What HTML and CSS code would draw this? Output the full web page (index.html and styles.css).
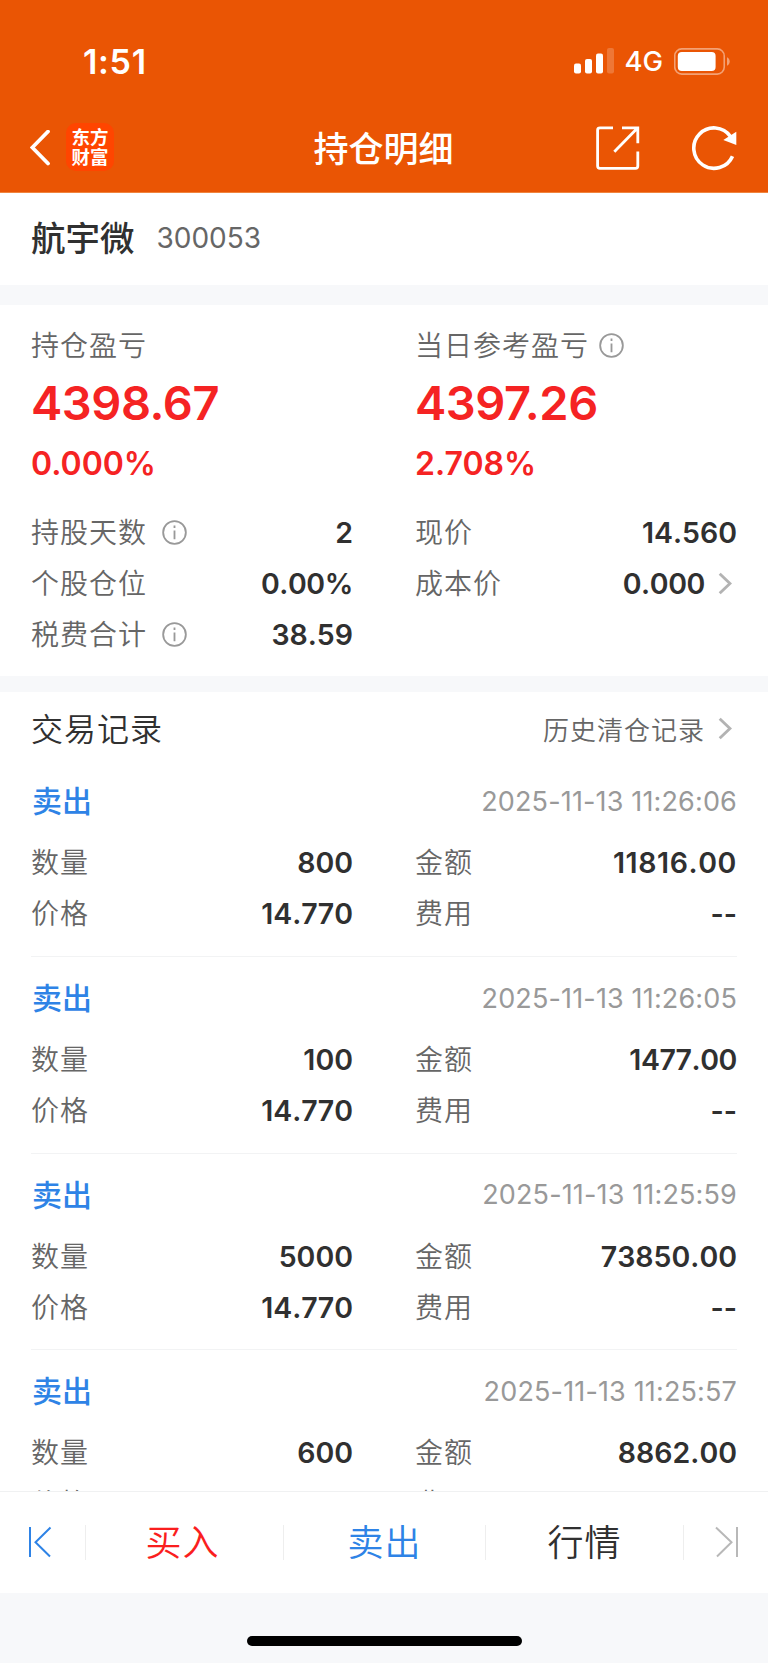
FILE: index.html
```html
<!DOCTYPE html>
<html lang="zh-CN">

<head>
    <meta charset="UTF-8">
    <meta name="viewport" content="width=device-width, initial-scale=1.0">
    <title>持仓明细</title>
    <link rel="stylesheet" href="styles.css">
</head>

<body>
    <!-- Status bar and navigation -->
    <header class="header">
        <div class="status-bar">
            <span class="time">1:51</span>
            <div class="status-icons">
                <svg class="signal" width="40" height="26" viewBox="0 0 40 26" fill="#fff">
                    <rect x="0" y="15.5" width="7" height="10" rx="2" />
                    <rect x="11" y="11" width="7" height="14.5" rx="2" />
                    <rect x="22" y="5.5" width="7" height="20" rx="2" />
                    <rect x="33" y="0" width="7" height="25.5" rx="2" opacity="0.2" />
                </svg>
                <span class="network">4G</span>
                <svg class="battery" width="56" height="27" viewBox="0 0 56 27">
                    <rect x="0.75" y="0.9" width="49.5" height="25.2" rx="7" fill="none" stroke="#fff" stroke-opacity="0.45" stroke-width="1.6" />
                    <rect x="3.8" y="4" width="37.8" height="19" rx="4" fill="#fff" />
                    <path d="M53 9.2C56.6 11 56.6 16 53 17.8Z" fill="#fff" fill-opacity="0.45" />
                </svg>
            </div>
        </div>
        <nav class="nav-bar">
            <div class="nav-left">
                <svg width="21" height="36" viewBox="0 0 21 36" fill="none" stroke="#fff" stroke-width="3.8">
                    <path d="M18 1.5L2.3 17.5L18 33.5" stroke-linecap="round" />
                </svg>
                <div class="logo">东方<br>财富</div>
            </div>
            <h1 class="title">持仓明细</h1>
            <div class="nav-right">
                <svg width="44" height="44" viewBox="0 0 44 44" fill="none" stroke="#fff" stroke-width="2.8">
                    <path d="M17 1.8H4Q1.6 1.8 1.6 4V40Q1.6 42.3 4 42.3H39.5Q41.8 42.3 41.8 40V25.5" />
                    <path d="M26 1.8H41.8V17.2M41.3 2.2L18.3 25.8" />
                </svg>
                <svg width="46" height="46" viewBox="0 0 46 46" fill="none">
                    <path d="M39.5 11.5A20.2 20.2 0 1 0 41.5 31.2" stroke="#fff" stroke-width="3.6" />
                    <path d="M32.3 15L45.3 6.7V20Z" fill="#fff" />
                </svg>
            </div>
        </nav>
    </header>

    <main class="content">
        <section class="stock">
            <span class="stock-name">航宇微</span>
            <span class="stock-code">300053</span>
        </section>

        <!-- Position summary -->
        <section class="summary">
            <div class="profit">
                <div class="label">持仓盈亏</div>
                <div class="amount">4398.67</div>
                <div class="percent">0.000%</div>
            </div>
            <div class="profit">
                <div class="label">当日参考盈亏
                    <svg class="info near" viewBox="0 0 26 26"><circle cx="13" cy="13" r="11.8" /><path d="M13 10.8V20M13 5.8V8.4" /></svg>
                </div>
                <div class="amount">4397.26</div>
                <div class="percent">2.708%</div>
            </div>
            <div class="rows">
                <div class="row">
                    <div class="label">持股天数
                        <svg class="info" viewBox="0 0 26 26"><circle cx="13" cy="13" r="11.8" /><path d="M13 10.8V20M13 5.8V8.4" /></svg>
                    </div>
                    <div class="value">2</div>
                </div>
                <div class="row">
                    <div class="label">个股仓位</div>
                    <div class="value tight">0.00%</div>
                </div>
                <div class="row">
                    <div class="label">税费合计
                        <svg class="info" viewBox="0 0 26 26"><circle cx="13" cy="13" r="11.8" /><path d="M13 10.8V20M13 5.8V8.4" /></svg>
                    </div>
                    <div class="value">38.59</div>
                </div>
            </div>
            <div class="rows">
                <div class="row">
                    <div class="label">现价</div>
                    <div class="value">14.560</div>
                </div>
                <div class="row">
                    <div class="label">成本价</div>
                    <div class="value tight">0.000
                        <svg class="arrow" viewBox="0 0 14 23"><path d="M1.7 1.7L12 11.5L1.7 21.3" /></svg>
                    </div>
                </div>
            </div>
        </section>

        <!-- Trade history -->
        <section class="records">
            <div class="records-head">
                <h2>交易记录</h2>
                <div class="history">历史清仓记录
                    <svg class="arrow" viewBox="0 0 14 23"><path d="M1.7 1.7L12 11.5L1.7 21.3" /></svg>
                </div>
            </div>
            <div class="record">
                <div class="record-head"><span class="side">卖出</span><span class="date">2025-11-13 11:26:06</span></div>
                <div class="record-grid">
                    <div class="row"><div class="label">数量</div><div class="value">800</div></div>
                    <div class="row"><div class="label">金额</div><div class="value wide">11816.00</div></div>
                    <div class="row"><div class="label">价格</div><div class="value">14.770</div></div>
                    <div class="row"><div class="label">费用</div><div class="value">--</div></div>
                </div>
            </div>
            <div class="record">
                <div class="record-head"><span class="side">卖出</span><span class="date">2025-11-13 11:26:05</span></div>
                <div class="record-grid">
                    <div class="row"><div class="label">数量</div><div class="value">100</div></div>
                    <div class="row"><div class="label">金额</div><div class="value tight">1477.00</div></div>
                    <div class="row"><div class="label">价格</div><div class="value">14.770</div></div>
                    <div class="row"><div class="label">费用</div><div class="value">--</div></div>
                </div>
            </div>
            <div class="record">
                <div class="record-head"><span class="side">卖出</span><span class="date">2025-11-13 11:25:59</span></div>
                <div class="record-grid">
                    <div class="row"><div class="label">数量</div><div class="value">5000</div></div>
                    <div class="row"><div class="label">金额</div><div class="value">73850.00</div></div>
                    <div class="row"><div class="label">价格</div><div class="value">14.770</div></div>
                    <div class="row"><div class="label">费用</div><div class="value">--</div></div>
                </div>
            </div>
            <div class="record">
                <div class="record-head"><span class="side">卖出</span><span class="date">2025-11-13 11:25:57</span></div>
                <div class="record-grid">
                    <div class="row"><div class="label">数量</div><div class="value">600</div></div>
                    <div class="row"><div class="label">金额</div><div class="value">8862.00</div></div>
                    <div class="row"><div class="label">价格</div><div class="value">14.770</div></div>
                    <div class="row"><div class="label">费用</div><div class="value">--</div></div>
                </div>
            </div>
        </section>
    </main>

    <!-- Bottom actions -->
    <footer class="footer">
        <div class="actions">
            <div class="action prev">
                <svg width="24" height="32" viewBox="0 0 24 32" fill="none" stroke="#2e83e6" stroke-width="2">
                    <path d="M2 1V31M22.5 1.5L7.5 16.2L22 30.5" />
                </svg>
            </div>
            <div class="action buy">买入</div>
            <div class="action sell">卖出</div>
            <div class="action quote">行情</div>
            <div class="action next">
                <svg width="24" height="32" viewBox="0 0 24 32" fill="none" stroke="#b8b8b8" stroke-width="2">
                    <path d="M22 1V31M1 1.5L16.5 16.2L2 30.5" />
                </svg>
            </div>
        </div>
        <div class="home-indicator"></div>
    </footer>
</body>

</html>
```

FILE: styles.css
```css
* {
    box-sizing: border-box;
}

body {
    margin: 0;
    height: 1663px;
    display: flex;
    flex-direction: column;
    overflow: hidden;
    font-family: Inter, "Noto Sans CJK SC", sans-serif;
    color: #303030;
    background-color: #fff;
}

h1,
h2 {
    margin: 0;
}

svg {
    display: block;
    flex: none;
}

/* Header */
.header {
    flex: none;
    height: 193px;
    background-color: #ea5504;
    border-bottom: 1px solid #f0853f;
    color: #fff;
}

.status-bar {
    height: 102px;
    padding: 20px 38px 0 83px;
    display: flex;
    align-items: center;
    justify-content: space-between;
}

.time {
    font-size: 34px;
    font-weight: 600;
    letter-spacing: 0.7px;
}

.status-icons {
    display: flex;
    align-items: center;
}

.network {
    margin: 0 11px 0 10px;
    font-size: 27.5px;
    font-weight: 500;
}

.nav-bar {
    height: 90px;
    padding: 2px 31px 0 30px;
    display: grid;
    grid-template-columns: 1fr auto 1fr;
    align-items: center;
}

.nav-left,
.nav-right {
    display: flex;
    align-items: center;
}

.nav-left {
    gap: 15px;
}

.nav-right {
    justify-content: flex-end;
    gap: 51px;
}

.logo {
    width: 48px;
    height: 48px;
    margin-bottom: 2px;
    padding-top: 4px;
    border-radius: 10px;
    background-color: #ff4500;
    font-size: 18.5px;
    font-weight: 700;
    line-height: 20px;
    text-align: center;
}

.title {
    padding-top: 1px;
    font-size: 35px;
    font-weight: 500;
    line-height: 48px;
}

/* Stock name */
.content {
    height: 1298px;
    flex: none;
    overflow: hidden;
}

.stock {
    height: 92px;
    padding: 0 31px 4px;
    display: flex;
    align-items: center;
    gap: 22px;
}

.stock-name {
    margin-bottom: 2px;
    font-size: 34.5px;
    font-weight: 500;
}

.stock-code {
    margin-top: 2px;
    font-size: 28px;
    color: #666;
}

/* Summary */
.summary {
    height: 407px;
    padding: 21px 31px 0;
    border-top: 20px solid #f7f8fa;
    border-bottom: 16px solid #f7f8fa;
    display: grid;
    grid-template-columns: 322px 322px;
    column-gap: 62px;
    align-content: start;
}

.label {
    padding-top: 1px;
    display: flex;
    align-items: center;
    font-size: 28px;
    font-weight: 350;
    letter-spacing: 1px;
    line-height: 38px;
    color: #666;
}

.profit {
    height: 181px;
}

.amount {
    margin-top: 9px;
    font-size: 47px;
    font-weight: 600;
    line-height: 58px;
    letter-spacing: -0.45px;
    color: #f52323;
}

.percent {
    margin-top: 12px;
    font-size: 32px;
    font-weight: 600;
    line-height: 40px;
    color: #f52323;
}

.info {
    width: 25px;
    height: 25px;
    margin: 0 0 1px 15px;
    fill: none;
    stroke: #999;
    stroke-width: 1.9;
}

.info.near {
    margin-left: 10px;
}

.row {
    height: 51px;
    display: flex;
    align-items: center;
    justify-content: space-between;
}

.value {
    display: flex;
    align-items: center;
    font-size: 28.5px;
    font-weight: 600;
    font-kerning: none;
}

.value.tight {
    letter-spacing: -0.4px;
}

.value.wide {
    letter-spacing: 0.6px;
}

.arrow {
    width: 14px;
    height: 23px;
    margin: 0 5px 0 13px;
    fill: none;
    stroke: #b3b3b3;
    stroke-width: 2.9;
}

/* Trade records */
.records {
    padding: 0 31px;
}

.records-head {
    height: 74px;
    display: flex;
    align-items: center;
    justify-content: space-between;
}

.records-head h2 {
    margin-bottom: 4px;
    font-size: 32px;
    font-weight: 350;
    letter-spacing: 1px;
}

.history {
    margin-bottom: 1px;
    display: flex;
    align-items: center;
    font-size: 26px;
    font-weight: 350;
    letter-spacing: 1px;
    color: #666;
}

.record {
    height: 196.5px;
    padding-top: 12px;
    border-bottom: 1px solid #f2f3f4;
}

.record + .record {
    padding-top: 18px;
}

.record:nth-child(2) {
    height: 191px;
}

.record-head {
    height: 46px;
    margin-bottom: 13px;
    display: flex;
    align-items: center;
    justify-content: space-between;
}

.side {
    margin: 0 0 4px 1px;
    font-size: 30px;
    font-weight: 500;
    color: #2e83e6;
}

.date {
    font-size: 27px;
    letter-spacing: 0.15px;
    color: #999;
}

.record-grid {
    display: grid;
    grid-template-columns: 322px 322px;
    column-gap: 62px;
}

/* Footer */
.footer {
    flex: 1;
    background-color: #f7f8fa;
}

.actions {
    height: 102px;
    border-top: 1px solid #f0f1f2;
    background-color: #fff;
    display: grid;
    grid-template-columns: 86px 198px 202px 198px 84px;
    align-items: center;
}

.action {
    height: 35px;
    padding-bottom: 5px;
    display: flex;
    align-items: center;
    justify-content: center;
    border-right: 1px solid #eee;
    font-size: 36px;
    font-weight: 350;
    letter-spacing: 1px;
}

.prev {
    padding: 0 5px 2px 0;
}

.buy {
    padding-right: 4px;
    color: #fa1e1e;
}

.sell {
    color: #2e83e6;
}

.next {
    border-right: none;
    padding: 0 0 2px 1px;
}

.home-indicator {
    width: 275px;
    height: 10px;
    margin: 43px auto 0;
    border-radius: 5px;
    background-color: #000;
}
```
